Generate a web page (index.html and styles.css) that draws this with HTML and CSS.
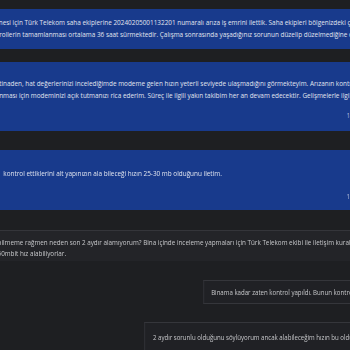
FILE: index.html
```html
<!DOCTYPE html>
<html lang="tr">
<head>
<meta charset="utf-8">
<title>Destek sohbeti</title>
<link rel="stylesheet" href="styles.css">
</head>
<body>
<div class="stage">
  <div class="msg agent first">
    <div class="line cut2">nesi için Türk Telekom saha ekiplerine 20240205001132201 numaralı arıza iş emrini ilettik. Saha ekipleri bölgenizdeki çalışmalarını sürdürmektedir.</div>
    <div class="line cut1">rollerin tamamlanması ortalama 36 saat sürmektedir. Çalışma sonrasında yaşadığınız sorunun düzelip düzelmediğine dair bilgi verebilirsiniz.</div>
  </div>

  <div class="msg agent second">
    <div class="line cut1">tinaden, hat değerlerinizi incelediğimde modeme gelen hızın yeterli seviyede ulaşmadığını görmekteyim. Arızanın kontrolü için ekiplerimize</div>
    <div class="line cut1">nması için modeminizi açık tutmanızı rica ederim. Süreç ile ilgili yakın takibim her an devam edecektir. Gelişmelerle ilgili sizi bilgilendireceğim.</div>
    <div class="foot"><span class="time">14:32</span></div>
  </div>

  <div class="msg agent third">
    <div class="line pad">kontrol ettiklerini alt yapınızın ala bileceği hızın 25-30 mb olduğunu iletim.</div>
    <div class="foot foot-low"><span class="time">14:35</span></div>
  </div>

  <div class="msg user wide">
    <div class="line cut3">bilmeme rağmen neden son 2 aydır alamıyorum? Bina içinde inceleme yapmaları için Türk Telekom ekibi ile iletişim kurabilir misiniz?</div>
    <div class="line cut3">50mbit hız alabiliyorlar.</div>
  </div>

  <div class="msg user bubble b1">
    <div class="line">Binama kadar zaten kontrol yapıldı. Bunun kontrolü için tekrar ekip gönderilmesine gerek yok.</div>
  </div>

  <div class="msg user bubble b2">
    <div class="line">2 aydır sorunlu olduğunu söylüyorum ancak alabileceğim hızın bu olduğunu şimdi öğreniyorum.</div>
  </div>
</div>
</body>
</html>
```
FILE: styles.css
```css
html, body {
  margin: 0;
  padding: 0;
  background: #1e1f22;
  overflow: hidden;
  width: 350px;
  height: 350px;
}

.stage {
  width: 427px;
  padding-top: 9px;
  transform: scaleX(0.82);
  transform-origin: 0 0;
  font-family: "Open Sans", "Noto Sans", sans-serif;
  font-size: 7.5px;
  display: flex;
  flex-direction: column;
}

.msg {
  white-space: nowrap;
  overflow: hidden;
  box-sizing: border-box;
}

.line {
  line-height: 12px;
  height: 12px;
}

.cut1 { text-indent: -1px; }
.cut2 { text-indent: -1.5px; }
.cut3 { text-indent: -3px; }
.pad { padding-left: 4px; }

.agent {
  background: #183a8c;
  color: #e1e5ef;
  font-size: 7.8px;
}

.first {
  padding: 7px 0 9px;
}

.second {
  margin-top: 13px;
  padding: 15px 0 9px;
}

.third {
  margin-top: 19px;
  padding: 17px 0 7px;
}

.foot {
  margin-top: 9px;
  height: 12px;
  line-height: 12px;
  padding-left: 423px;
  color: #c9d0e4;
  font-size: 6.5px;
}

.foot-low {
  margin-top: 12px;
}

.user {
  color: #c6c7ca;
}

.wide {
  margin-top: 20px;
  background: #232428;
  border-top: 1px solid #34353a;
  padding: 6px 0 3px;
  font-size: 7.7px;
}

.wide .line {
  line-height: 10.5px;
  height: 10.5px;
}

.bubble {
  background: #202125;
  border: 1px solid #35363b;
  border-right: 0;
  line-height: 11px;
  font-size: 7.45px;
}

.bubble .line {
  line-height: 11px;
  height: 11px;
}

.b1 {
  margin-top: 19px;
  margin-left: 248px;
  padding: 6px 0 5px 8.5px;
}

.b2 {
  margin-top: 18px;
  margin-left: 176px;
  padding: 9px 0 8px 9.5px;
}
```
